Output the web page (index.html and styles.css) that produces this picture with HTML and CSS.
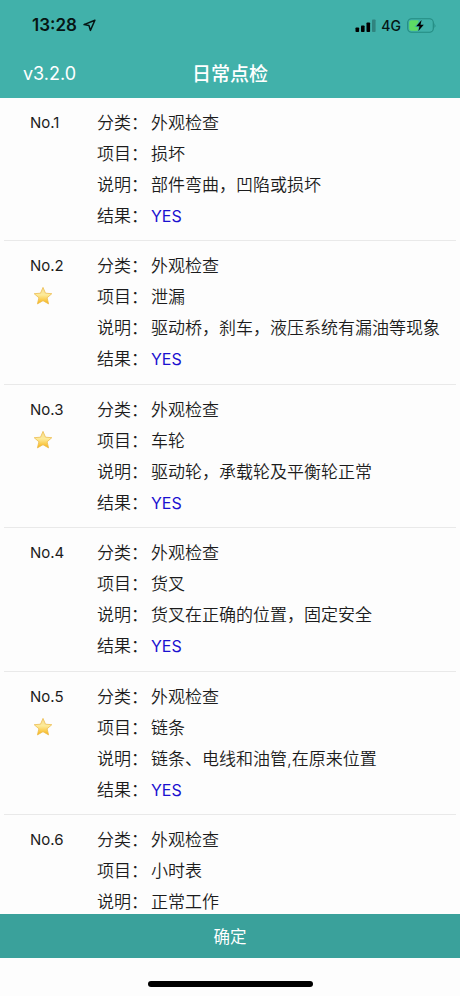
FILE: index.html
```html
<!DOCTYPE html>
<html lang="zh-CN">
<head>
  <meta charset="UTF-8" />
  <meta name="viewport" content="width=device-width, initial-scale=1.0" />
  <title>日常点检</title>
  <link rel="stylesheet" href="styles.css">
</head>
<body>
  <div class="status-bar">
    <span class="time">13:28</span>
    <svg class="location" width="13" height="13" viewBox="0 0 13 13">
      <path d="M11.9 1.3 L1 5.6 L6 6.6 L7.4 11.4 Z" fill="none" stroke="#061514" stroke-width="1.5" stroke-linejoin="round" />
    </svg>
    <svg class="signal" width="21" height="13" viewBox="0 0 21 13">
      <rect x="0.5" y="8.5" width="3.6" height="4.5" rx="0.8" />
      <rect x="6" y="6.5" width="3.6" height="6.5" rx="0.8" />
      <rect x="11.5" y="3.5" width="3.6" height="9.5" rx="0.8" />
      <rect x="17" y="0.5" width="3.6" height="12.5" rx="0.8" opacity="0.25" />
    </svg>
    <span class="network">4G</span>
    <svg class="battery" width="30" height="15" viewBox="0 0 30 15">
      <rect x="0.7" y="0.8" width="25.6" height="13.4" rx="3.8" fill="none" stroke="#238a81" stroke-width="1.1" />
      <path d="M27.5 5 Q29.3 7.5 27.5 10 Z" fill="#238a81" />
      <path d="M4.5 2.3 H11.5 V12.7 H4.5 Q2.2 12.7 2.2 10.4 V4.6 Q2.2 2.3 4.5 2.3 Z" fill="#5edc64" />
      <path d="M14.6 1.9 L9.2 8.2 H12.5 L11.4 13.1 L16.8 6.8 H13.5 Z" fill="#000" stroke="#41b1aa" stroke-width="1.6" paint-order="stroke" />
    </svg>
  </div>

  <div class="navbar">
    <span class="version">v3.2.0</span>
    <h1>日常点检</h1>
  </div>

  <div class="list">
    <div class="item">
      <div class="index">No.1</div>
      <div class="info">
        <div class="row"><span class="label">分类：</span><span>外观检查</span></div>
        <div class="row"><span class="label">项目：</span><span>损坏</span></div>
        <div class="row"><span class="label">说明：</span><span>部件弯曲，凹陷或损坏</span></div>
        <div class="row"><span class="label">结果：</span><span class="result">YES</span></div>
      </div>
    </div>
    <div class="item">
      <div class="index">No.2
        <svg class="star" viewBox="0 0 20 20"><use href="#star" /></svg>
      </div>
      <div class="info">
        <div class="row"><span class="label">分类：</span><span>外观检查</span></div>
        <div class="row"><span class="label">项目：</span><span>泄漏</span></div>
        <div class="row"><span class="label">说明：</span><span>驱动桥，刹车，液压系统有漏油等现象</span></div>
        <div class="row"><span class="label">结果：</span><span class="result">YES</span></div>
      </div>
    </div>
    <div class="item">
      <div class="index">No.3
        <svg class="star" viewBox="0 0 20 20"><use href="#star" /></svg>
      </div>
      <div class="info">
        <div class="row"><span class="label">分类：</span><span>外观检查</span></div>
        <div class="row"><span class="label">项目：</span><span>车轮</span></div>
        <div class="row"><span class="label">说明：</span><span>驱动轮，承载轮及平衡轮正常</span></div>
        <div class="row"><span class="label">结果：</span><span class="result">YES</span></div>
      </div>
    </div>
    <div class="item">
      <div class="index">No.4</div>
      <div class="info">
        <div class="row"><span class="label">分类：</span><span>外观检查</span></div>
        <div class="row"><span class="label">项目：</span><span>货叉</span></div>
        <div class="row"><span class="label">说明：</span><span>货叉在正确的位置，固定安全</span></div>
        <div class="row"><span class="label">结果：</span><span class="result">YES</span></div>
      </div>
    </div>
    <div class="item">
      <div class="index">No.5
        <svg class="star" viewBox="0 0 20 20"><use href="#star" /></svg>
      </div>
      <div class="info">
        <div class="row"><span class="label">分类：</span><span>外观检查</span></div>
        <div class="row"><span class="label">项目：</span><span>链条</span></div>
        <div class="row"><span class="label">说明：</span><span>链条、电线和油管,在原来位置</span></div>
        <div class="row"><span class="label">结果：</span><span class="result">YES</span></div>
      </div>
    </div>
    <div class="item">
      <div class="index">No.6</div>
      <div class="info">
        <div class="row"><span class="label">分类：</span><span>外观检查</span></div>
        <div class="row"><span class="label">项目：</span><span>小时表</span></div>
        <div class="row"><span class="label">说明：</span><span>正常工作</span></div>
      </div>
    </div>
  </div>

  <button class="confirm">确定</button>
  <div class="home-area"><div class="home-bar"></div></div>

  <svg class="defs" width="0" height="0">
    <defs>
      <linearGradient id="gold" x1="0" y1="0" x2="0" y2="1">
        <stop offset="0" stop-color="#f5dc8c" />
        <stop offset="0.45" stop-color="#fdeb9a" />
        <stop offset="1" stop-color="#f8b312" />
      </linearGradient>
      <symbol id="star" viewBox="0 0 20 20">
        <path d="M10 1.4 L12.5 7.2 L18.8 7.7 L14.1 11.8 L15.6 17.9 L10 14.7 L4.4 17.9 L5.9 11.8 L1.2 7.7 L7.5 7.2 Z" fill="url(#gold)" stroke="#ecbd50" stroke-width="0.8" stroke-linejoin="round" />
      </symbol>
    </defs>
  </svg>
</body>
</html>
```
FILE: styles.css
```css
* {
  box-sizing: border-box;
}
body {
  display: flex;
  flex-direction: column;
  height: 996px;
  margin: 0;
  overflow: hidden;
  background-color: #fdfdfd;
  color: #1c1c1c;
  font-family: Inter, "Noto Sans CJK SC", sans-serif;
}
.status-bar {
  display: flex;
  align-items: center;
  flex: none;
  height: 50px;
  padding: 0 23px 0 32px;
  background-color: #41b1aa;
  color: #061514;
}
.time {
  width: 47px;
  font-size: 17px;
  font-weight: 600;
  white-space: nowrap;
}
.location {
  margin-left: 4px;
}
.signal {
  margin-left: auto;
}
.network {
  margin: 0 6px 0 5px;
  font-size: 14px;
  font-weight: 500;
}
.navbar {
  display: grid;
  grid-template-columns: 1fr auto 1fr;
  align-items: center;
  flex: none;
  height: 48px;
  padding: 0 23px 3px;
  background-color: #41b1aa;
  color: #fff;
}
.version {
  padding-top: 2px;
  font-size: 18px;
}
.navbar h1 {
  margin: 0;
  font-size: 19px;
  font-weight: 500;
}
.list {
  flex: 1;
  min-height: 0;
  padding: 0 4px;
  overflow: hidden;
}
.item {
  display: flex;
  height: 143.4px;
  padding: 10px 0 0 26px;
  border-bottom: 1px solid #e9e9e9;
}
.index {
  width: 67px;
  font-size: 15px;
  line-height: 30px;
}
.star {
  display: block;
  width: 20px;
  height: 20px;
  margin: 5px 0 0 3px;
}
.row {
  display: flex;
  height: 31px;
  font-size: 17px;
  font-weight: 350;
  line-height: 31px;
  white-space: nowrap;
}
.label {
  width: 54px;
}
.result {
  color: #1a10d0;
  font-size: 16px;
  font-weight: 400;
}
.confirm {
  flex: none;
  height: 44px;
  padding: 0;
  border: none;
  background-color: #3aa19b;
  color: #fff;
  font-family: inherit;
  font-size: 16.5px;
}
.home-area {
  display: flex;
  justify-content: center;
  flex: none;
  height: 38px;
  padding-top: 23px;
}
.home-bar {
  width: 165px;
  height: 6px;
  border-radius: 3px;
  background-color: #000;
}
.defs {
  position: absolute;
}
```
